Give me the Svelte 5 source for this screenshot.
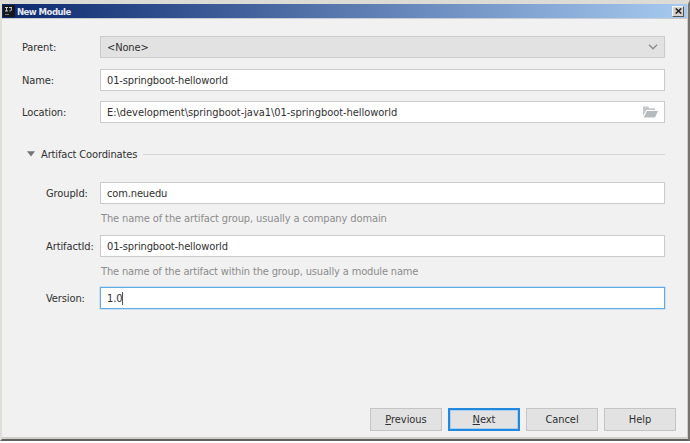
<script>
  const fields = [
    { label: 'Parent:', value: '<None>', kind: 'select' },
    { label: 'Name:', value: '01-springboot-helloworld', kind: 'text' },
    { label: 'Location:', value: 'E:\\development\\springboot-java1\\01-springboot-helloworld', kind: 'path' }
  ];
  const coordinates = [
    { label: 'GroupId:', value: 'com.neuedu', hint: 'The name of the artifact group, usually a company domain' },
    { label: 'ArtifactId:', value: '01-springboot-helloworld', hint: 'The name of the artifact within the group, usually a module name' },
    { label: 'Version:', value: '1.0', focused: true }
  ];
</script>

<div class="window">
  <header>
    <svg class="logo" width="12" height="12" viewBox="0 0 12 12">
      <rect width="12" height="12" fill="#15171c" />
      <path d="M2 2.5h3M3.5 2.5v3.5M2 6h3M6 2.5h3M8.3 2.5v2.7q0 .9-2 .8" stroke="#c5cad2" fill="none" />
      <path d="M2 9.5h4" stroke="#777c84" />
    </svg>
    <span class="title">New Module</span>
    <span class="close">
      <svg width="7" height="6" viewBox="0 0 7 6"><path d="M.7.5l5.6 5M6.3.5l-5.6 5" stroke="#222" stroke-width="1.6" /></svg>
    </span>
  </header>
  <main>
    {#each fields as f}
      <div class="row {f.kind}">
        <span class="label">{f.label}</span>
        <div class="field">
          <span class="value">{f.value}</span>
          {#if f.kind === 'select'}
            <svg width="10" height="6" viewBox="0 0 10 6"><path d="M1 .8l4 4 4-4" stroke="#8c8c8c" stroke-width="1.4" fill="none" /></svg>
          {:else if f.kind === 'path'}
            <svg width="15" height="12" viewBox="0 0 15 12"><path d="M0 .5h5l1.5 1.7H12V4H3.5L0 10z" fill="#c3c8cb" /><path d="M4 5h11l-3 6.5H.7z" fill="#b5bbbf" /></svg>
          {/if}
        </div>
      </div>
    {/each}
    <div class="section">
      <svg width="8" height="6" viewBox="0 0 8 6"><path d="M0 .3h8L4 5.5z" fill="#747474" /></svg>
      <span>Artifact Coordinates</span>
      <i></i>
    </div>
    {#each coordinates as c, n}
      <div class="row sub">
        <span class="label">{c.label}</span>
        <div class="field" class:focused={c.focused}>
          <span class="value">{c.value}</span>{#if c.focused}<b class="caret"></b>{/if}
        </div>
      </div>
      {#if c.hint}<p class:long={n === 1}>{c.hint}</p>{/if}
    {/each}
  </main>
  <footer>
    <div class="button"><span><u>P</u>revious</span></div>
    <div class="button default"><span><u>N</u>ext</span></div>
    <div class="button"><span>Cancel</span></div>
    <div class="button"><span>Help</span></div>
  </footer>
</div>

<style>
  :global(body) { background: #fff; }
  .window {
    box-sizing: border-box;
    width: 690px;
    height: 441px;
    display: flex;
    flex-direction: column;
    background: #f1f1f1;
    border: 2px solid #dfded9;
    border-top: 4px solid #dcdbd6;
    border-right: 2px solid #77736f;
    border-bottom: 2px solid #606060;
    box-shadow: inset -1px -2px 0 #d2cfcb;
    font: 11px/14px 'DejaVu Sans Condensed', 'DejaVu Sans', sans-serif;
    font-stretch: condensed;
    letter-spacing: -.13px;
    color: #303030;
    white-space: nowrap;
    overflow: hidden;
  }
  header {
    flex: none;
    display: flex;
    align-items: center;
    height: 15px;
    margin-right: 1px;
    padding: 0 3px 0 1px;
    box-sizing: border-box;
    background: linear-gradient(90deg, #0c286e, #a6caf0);
    border-bottom: 1px solid #c7cbd4;
  }
  .title { margin: 1px 0 0 2px; color: #e4e8f2; font-size: 9.5px; font-weight: bold; letter-spacing: -.55px; }
  .close {
    margin-left: auto;
    width: 10px;
    height: 9px;
    display: flex;
    align-items: center;
    justify-content: center;
    background: #d6d3ce;
    border: 1px solid;
    border-color: #f5f5f5 #555 #555 #f5f5f5;
  }
  main { flex: 1; padding: 17px 23px 0 20px; }
  .row { display: flex; align-items: center; height: 22px; margin-bottom: 10px; }
  .row.select { margin-bottom: 11px; }
  .row.path { margin-bottom: 20px; }
  .label { width: 78px; flex: none; letter-spacing: -.1px; padding-top: 2px; }
  .field {
    box-sizing: border-box;
    flex: 1;
    height: 22px;
    display: flex;
    align-items: center;
    padding: 0 6px;
    background: #fff;
    border: 1px solid #cbcbcb;
  }
  .value { padding-top: 2px; }
  .path .value { letter-spacing: -.04px; }
  .select .field { background: #e2e2e2; }
  .field svg { margin-left: auto; }
  .section { display: flex; align-items: center; height: 22px; padding-left: 5px; margin-bottom: 17px; }
  .section span { margin: 0 6px 0 6px; padding-top: 2px; }
  .section i { flex: 1; height: 1px; background: #d6d6d6; }
  .row.sub { padding-left: 24px; margin: 0; }
  .sub .label { width: 54px; }
  .field.focused { border-color: #62abe2; box-shadow: 0 0 0 .5px #a8cfee; }
  .caret { width: 1px; height: 13px; background: #555; }
  p { margin: 0 0 0 79px; height: 31px; line-height: 29px; color: #8c8c8c; letter-spacing: -.11px; }
  p.long { height: 30px; letter-spacing: -.15px; }
  footer { display: flex; justify-content: flex-end; gap: 6px; padding: 0 12px 8px 0; }
  .button {
    box-sizing: border-box;
    width: 72px;
    height: 23px;
    display: flex;
    align-items: center;
    justify-content: center;
    background: #e2e2e2;
    border: 1px solid #c4c4c4;
    letter-spacing: -.05px;
  }
  .default { border: 2px solid #2389df; box-shadow: inset 0 0 0 1px #a9cdec; }
</style>
